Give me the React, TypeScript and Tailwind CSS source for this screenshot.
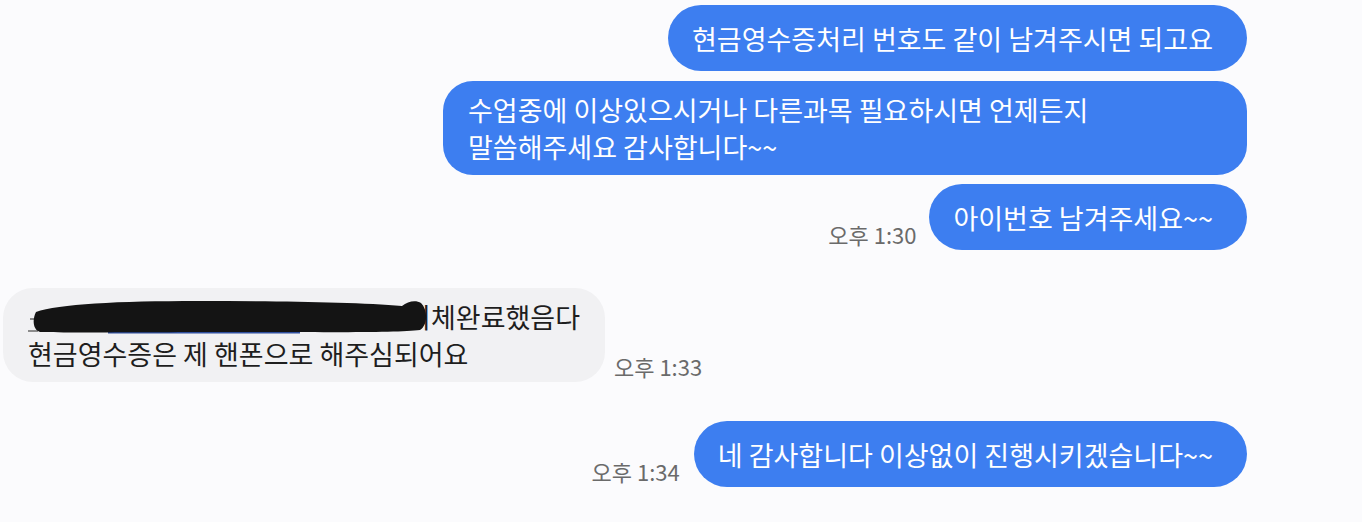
import React from "react";

const font = { fontFamily: '"Noto Sans CJK KR", "Noto Sans", sans-serif' };

const Time = ({ text }: { text: string }) => (
  <span className="text-[22px] leading-[28px] text-[#6a6a6a] whitespace-nowrap mb-[2px]">{text}</span>
);

const Redaction = () => (
  <span className="relative z-10 inline-block w-[400px] h-[37px] align-top -mr-[18px]">
    <svg width="400" height="37" viewBox="0 0 400 37" className="absolute left-0 top-0">
      <path d="M2 21 L10 21" stroke="#8a8a8a" strokeWidth="2" />
      <path d="M0 33 L10 33" stroke="#6a6a6a" strokeWidth="1.5" />
      <path d="M80 34.5 L272 34.5" stroke="#2f4f9e" strokeWidth="2" />
      <path
        d="M8 14 C 30 6, 90 3, 170 3 C 250 3, 330 4, 374 8 C 380 3, 388 2, 393 5 C 400 12, 400 27, 392 32 C 370 35, 300 34, 200 34 C 120 34, 40 35, 12 34 C 5 32, 4 22, 8 14 Z"
        fill="#141414"
      />
    </svg>
  </span>
);

const Pill = ({ children }: { children: React.ReactNode }) => (
  <div className="bg-[#3d7ef0] text-white text-[27px] leading-[37px] rounded-[33px] h-[66px] pl-6 pr-[34px] flex items-center whitespace-nowrap">
    {children}
  </div>
);

export default function App() {
  return (
    <div className="w-[1362px] h-[522px] bg-[#fbfbfd] overflow-hidden" style={font}>
      <div className="flex flex-col pl-[3px] pr-[115px] pt-[5px]">
        <div className="flex justify-end">
          <Pill>현금영수증처리 번호도 같이 남겨주시면 되고요</Pill>
        </div>

        <div className="flex justify-end mt-[10px]">
          <div className="bg-[#3d7ef0] text-white text-[27px] leading-[37px] rounded-[30px] w-[804px] h-[94px] py-[10px] px-[25px] whitespace-nowrap">
            수업중에 이상있으시거나 다른과목 필요하시면 언제든지
            <br />
            말씀해주세요 감사합니다~~
          </div>
        </div>

        <div className="flex justify-end items-end gap-[13px] mt-[9px]">
          <Time text="오후 1:30" />
          <Pill>아이번호 남겨주세요~~</Pill>
        </div>

        <div className="flex justify-start items-end gap-[9px] mt-[38px]">
          <div className="bg-[#f1f1f3] text-[#1e1e1e] text-[27px] leading-[37px] rounded-[30px] w-[602px] h-[94px] py-[10px] px-[25px] whitespace-nowrap">
            <div className="flex">
              <Redaction />
              <span>이체완료했음다</span>
            </div>
            <div>현금영수증은 제 핸폰으로 해주심되어요</div>
          </div>
          <Time text="오후 1:33" />
        </div>

        <div className="flex justify-end items-end gap-[14px] mt-[39px]">
          <Time text="오후 1:34" />
          <Pill>네 감사합니다 이상없이 진행시키겠습니다~~</Pill>
        </div>
      </div>
    </div>
  );
}
